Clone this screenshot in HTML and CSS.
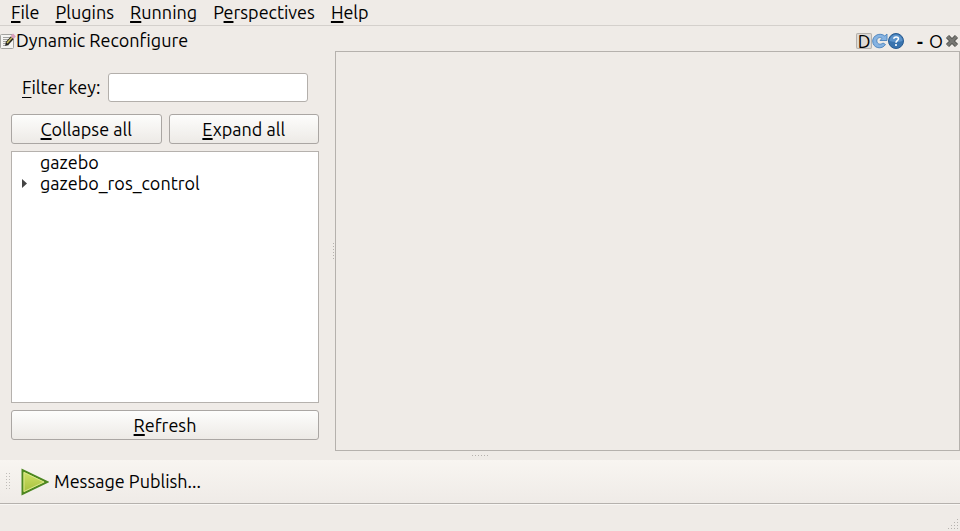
FILE: index.html
```html
<!DOCTYPE html>
<html lang="en">
<head>
<meta charset="utf-8">
<title>Dynamic Reconfigure</title>
<link rel="stylesheet" href="styles.css">
</head>
<body>
<nav class="menubar">
  <button type="button" class="menu"><u>F</u>ile</button>
  <button type="button" class="menu"><u>P</u>lugins</button>
  <button type="button" class="menu"><u>R</u>unning</button>
  <button type="button" class="menu">P<u>e</u>rspectives</button>
  <button type="button" class="menu"><u>H</u>elp</button>
</nav>
<header class="titlebar">
  <svg class="icon" viewBox="0 0 16 16" aria-hidden="true">
    <rect x="0.5" y="1.5" width="13" height="14" rx="1" fill="#f4f4f2" stroke="#a3a3a0"/>
    <path d="M3 4.500h7M3 6.500h6M3 8.500h5M3 10.500h3M3 12.500h2" stroke="#a2a2a0"/>
    <path d="M5 13l1-4 3 3z" fill="#222"/>
    <path d="M7 10.500l5.500-6" stroke="#292922" stroke-width="4"/>
    <path d="M7 10l5-5.500" stroke="#c9bd60" stroke-width="1.500"/>
    <path d="M12 4.500l2.500-2.500" stroke="#d8a0bd" stroke-width="4"/>
  </svg>
  <h1 class="title">Dynamic Reconfigure</h1>
  <div class="tools">
    <button type="button" class="tool detach" aria-label="Dock">D</button>
    <button type="button" class="tool" aria-label="Reload">
      <svg class="icon" viewBox="0 0 16 16" aria-hidden="true">
        <path d="M13.500 11.500l-2.500-1.500C9 12 5 11.500 4.800 8 4.600 5 8 3.500 10 5.500L8 7.500h7v-6.500l-2.200 2C8-1 .7 2.500 .7 8c0 7.500 9.300 9 12.800 3.500z" fill="#86b3e2" stroke="#5489c0" stroke-linejoin="round"/>
      </svg>
    </button>
    <button type="button" class="tool" aria-label="Help">
      <svg class="icon" viewBox="0 0 16 16" aria-hidden="true">
        <circle cx="8" cy="8" r="7.500" fill="#3973ae" stroke="#295b91"/>
        <path d="M1.500 8a6.500 6.500 0 0 1 13 0q-6 2-13 0" fill="#5d94cb"/>
        <path d="M5.800 5.800C6 3.300 10.600 3.300 10.400 6 10.300 7.700 8 7.700 8 9.800M8 11v2" fill="none" stroke="#fff" stroke-width="1.600"/>
      </svg>
    </button>
    <button type="button" class="tool minimize" aria-label="Minimize">-</button>
    <button type="button" class="tool maximize" aria-label="Maximize">O</button>
    <button type="button" class="tool" aria-label="Close">
      <svg class="icon" viewBox="0 0 16 16" aria-hidden="true">
        <path d="M3.500 3.500l9 9M12.500 3.500l-9 9" stroke="#555551" stroke-width="4.500"/>
        <path d="M3.500 3.500l9 9M12.500 3.500l-9 9" stroke="#777773" stroke-width="2.500"/>
      </svg>
    </button>
  </div>
</header>
<main class="workspace">
  <section class="sidebar">
    <div class="filter">
      <label for="filter"><u>F</u>ilter key:</label>
      <input id="filter" class="field" type="text">
    </div>
    <div class="pair">
      <button type="button" class="button"><u>C</u>ollapse all</button>
      <button type="button" class="button"><u>E</u>xpand all</button>
    </div>
    <ul class="tree">
      <li class="node">gazebo</li>
      <li class="node branch">gazebo_ros_control</li>
    </ul>
    <button type="button" class="button"><u>R</u>efresh</button>
  </section>
  <div class="splitter"><span class="grip-column"></span></div>
  <section class="canvas"></section>
</main>
<div class="divider"><span class="grip-row"></span></div>
<div class="toolbar">
  <svg class="handle" viewBox="0 0 5 17" aria-hidden="true">
    <path d="M.5 0v17M3.500 0v17" stroke="#c0bdb9" stroke-dasharray="1 2"/>
  </svg>
  <button type="button" class="publish">
    <svg class="play" viewBox="0 0 28 28" aria-hidden="true">
      <defs>
        <linearGradient id="leaf" x1="0" y1="0" x2="0" y2="1">
          <stop offset="0" stop-color="#d3e46c"/>
          <stop offset="1" stop-color="#a3bd38"/>
        </linearGradient>
      </defs>
      <path d="M1.500 2v24L26 14z" fill="url(#leaf)" stroke="#4d8720" stroke-width="2"/>
      <path d="M3 4.500v19L23 14z" fill="none" stroke="#d9e78a"/>
    </svg>
    Message Publish...
  </button>
</div>
<footer class="statusbar">
  <svg class="resize" viewBox="0 0 11 11" aria-hidden="true">
    <path d="M9 0h1v1H9zM6 3h1v1H6zM9 3h1v1H9zM3 6h1v1H3zM6 6h1v1H6zM9 6h1v1H9zM0 9h1v1H0zM3 9h1v1H3zM6 9h1v1H6zM9 9h1v1H9z" fill="#b5b2ae"/>
  </svg>
</footer>
</body>
</html>
```
FILE: styles.css
```css
* {
  box-sizing: border-box;
}

body {
  display: flex;
  flex-direction: column;
  min-height: 100vh;
  margin: 0;
  background: #efebe7;
  color: #000;
  font: 18px/21px Ubuntu, "Noto Sans", sans-serif;
}

button,
input {
  margin: 0;
  padding: 0;
  border: 0;
  background: none;
  color: inherit;
  font: inherit;
}

u {
  text-decoration-thickness: 2px;
  text-underline-offset: 2px;
  text-decoration-skip-ink: none;
}

.icon {
  display: block;
  width: 16px;
  height: 16px;
}

.menubar {
  display: flex;
  gap: 16px;
  padding: 2px 11px;
  border-bottom: 1px solid #d4d0cc;
}

.titlebar {
  display: flex;
  align-items: center;
  height: 25px;
  padding-top: 4px;
}

.title {
  flex: 1;
  margin: 0;
  font-size: 18px;
  font-weight: 400;
}

.tools {
  display: flex;
  align-items: center;
}

.tool {
  min-width: 16px;
  line-height: 16px;
}

.detach {
  border-radius: 2px;
  background: #dedad6;
  box-shadow: inset 0 0 0 1px #b5b1ad;
}

.minimize {
  margin-left: 8px;
  font-weight: 700;
}

.workspace {
  display: flex;
  flex: 1;
}

.sidebar {
  display: flex;
  flex: 0 0 319px;
  flex-direction: column;
  gap: 7px;
  min-width: 0;
  padding: 22px 0 11px 11px;
}

.filter {
  display: flex;
  align-items: center;
  gap: 8px;
  padding: 0 11px 5px;
}

.filter u {
  text-decoration-thickness: 1px;
  text-underline-offset: 3px;
}

.field {
  flex: 1;
  min-width: 0;
  height: 29px;
  padding: 0 5px;
  border: 1px solid #b3afab;
  border-radius: 3px;
  background: #fff;
}

.pair {
  display: flex;
  gap: 7px;
}

.pair .button {
  flex: 1;
}

.button {
  height: 30px;
  border: 1px solid #aaa6a3;
  border-radius: 3px;
  background: linear-gradient(#fdfdfc, #edeae6);
}

.tree {
  flex: 1;
  margin: 0;
  padding: 0;
  border: 1px solid #b5b1ad;
  background: #fff;
  list-style: none;
}

.node {
  display: flex;
  align-items: center;
  padding-left: 28px;
}

.branch {
  padding-left: 10px;
}

.branch::before {
  width: 5px;
  height: 9px;
  margin-right: 13px;
  background: #444;
  clip-path: polygon(0 0, 100% 50%, 0 100%);
  content: "";
}

.splitter {
  display: flex;
  align-items: center;
  justify-content: flex-end;
  width: 16px;
  padding-right: 1px;
}

.grip-column {
  width: 1px;
  height: 16px;
  background: repeating-linear-gradient(#b5b1ad 0 1px, transparent 1px 3px);
}

.canvas {
  flex: 1;
  border: 1px solid #b5b1ad;
}

.divider {
  display: flex;
  align-items: center;
  justify-content: center;
  height: 9px;
}

.grip-row {
  width: 16px;
  height: 1px;
  background: repeating-linear-gradient(90deg, #b5b1ad 0 1px, transparent 1px 3px);
}

.toolbar {
  display: flex;
  align-items: center;
  gap: 10px;
  height: 44px;
  padding-left: 6px;
  border-bottom: 1px solid #b5b1ad;
  background: linear-gradient(#f8f5f1, #efebe7);
}

.handle {
  width: 5px;
  height: 17px;
}

.publish {
  display: flex;
  align-items: center;
  gap: 5px;
}

.play {
  width: 28px;
  height: 28px;
}

.statusbar {
  display: flex;
  align-items: flex-end;
  justify-content: flex-end;
  height: 27px;
  padding: 1px;
  border-top: 1px solid #f8f6f3;
}

.resize {
  width: 11px;
  height: 11px;
}
```
